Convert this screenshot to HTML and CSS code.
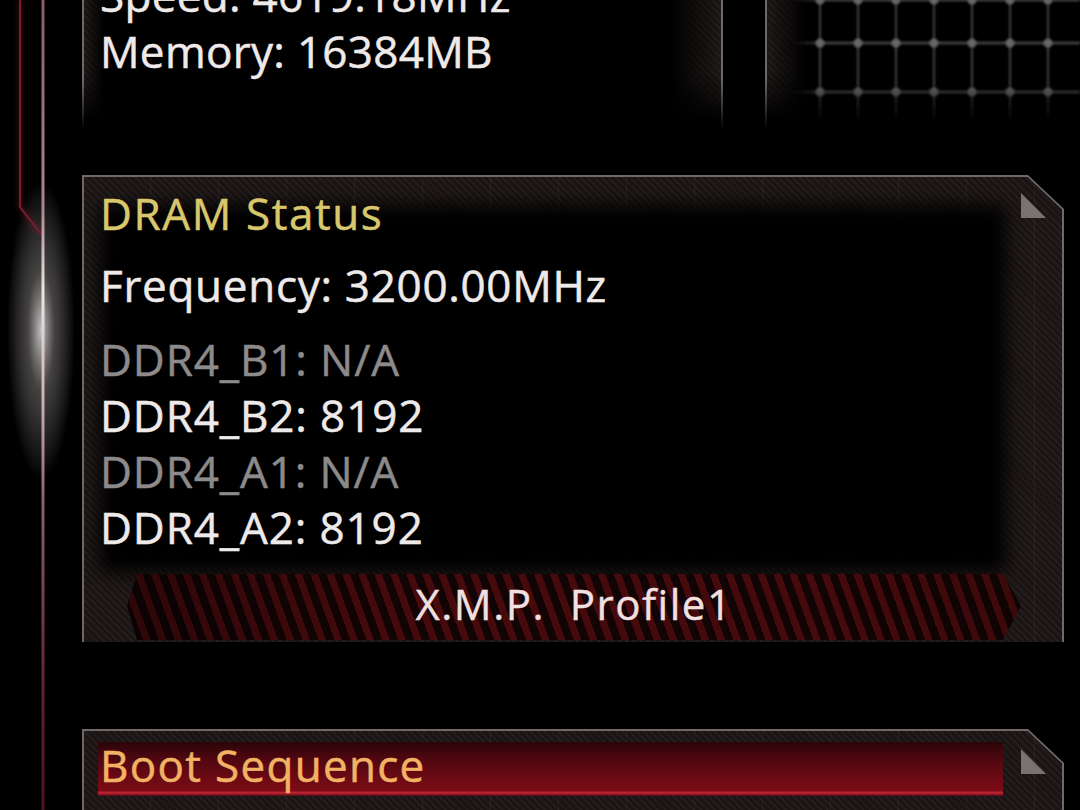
FILE: index.html
```html
<!DOCTYPE html>
<html lang="en">
<head>
<meta charset="utf-8">
<title>DRAM Status</title>
<link rel="stylesheet" href="styles.css">
</head>
<body>
<div class="screen">
  <aside class="rail">
    <svg width="82" height="810" viewBox="0 0 82 810" aria-hidden="true">
      <defs>
        <linearGradient id="railLine" x1="0" y1="0" x2="0" y2="810" gradientUnits="userSpaceOnUse">
          <stop offset="0" stop-color="#8a5a64"/>
          <stop offset="0.26" stop-color="#a98890"/>
          <stop offset="0.36" stop-color="#eee6e6"/>
          <stop offset="0.5" stop-color="#c6aeb2"/>
          <stop offset="0.62" stop-color="#8a6068"/>
          <stop offset="0.85" stop-color="#5e2430"/>
          <stop offset="1" stop-color="#4a1420"/>
        </linearGradient>
        <radialGradient id="railGlow" cx="0.5" cy="0.5" r="0.5">
          <stop offset="0" stop-color="#ffffff" stop-opacity="0.75"/>
          <stop offset="0.4" stop-color="#d8cccc" stop-opacity="0.32"/>
          <stop offset="1" stop-color="#ffffff" stop-opacity="0"/>
        </radialGradient>
        <filter id="soft" x="-50%" y="-5%" width="200%" height="110%">
          <feGaussianBlur stdDeviation="2.5"/>
        </filter>
      </defs>
      <ellipse cx="41" cy="330" rx="34" ry="150" fill="url(#railGlow)"/>
      <path d="M20 0 V207 L41 234" stroke="#9a2038" stroke-width="6" fill="none" opacity="0.25" filter="url(#soft)"/>
      <path d="M20 0 V207 L41 234" stroke="#7a1c30" stroke-width="2" fill="none"/>
      <line x1="43" y1="0" x2="43" y2="810" stroke="url(#railLine)" stroke-width="7" opacity="0.3" filter="url(#soft)"/>
      <line x1="43" y1="0" x2="43" y2="810" stroke="url(#railLine)" stroke-width="3"/>
    </svg>
  </aside>

  <main class="content">
    <section class="top-row">
      <div class="sys-panel">
        <p class="line">Speed: 4619.18MHz</p>
        <p class="line">Memory: 16384MB</p>
      </div>
      <div class="grid-panel">
        <svg class="grid" width="315" height="175" viewBox="0 0 315 175" aria-hidden="true">
          <defs>
            <filter id="haze" x="-10%" y="-10%" width="120%" height="120%">
              <feGaussianBlur stdDeviation="1"/>
            </filter>
            <linearGradient id="rowFade" x1="0" y1="0" x2="315" y2="0" gradientUnits="userSpaceOnUse">
              <stop offset="0.08" stop-color="#3e3e3e" stop-opacity="0"/>
              <stop offset="0.2" stop-color="#3e3e3e"/>
              <stop offset="1" stop-color="#3e3e3e"/>
            </linearGradient>
          </defs>
          <g filter="url(#haze)">
            <g stroke="url(#rowFade)" stroke-width="3">
              <line x1="20" y1="40" x2="315" y2="40"/>
              <line x1="20" y1="83" x2="315" y2="83"/>
              <line x1="20" y1="132" x2="315" y2="132"/>
            </g>
            <g stroke="#424242" stroke-width="2">
              <line x1="55" y1="0" x2="55" y2="175"/>
              <line x1="93" y1="0" x2="93" y2="175"/>
              <line x1="131" y1="0" x2="131" y2="175"/>
              <line x1="169" y1="0" x2="169" y2="175"/>
              <line x1="207" y1="0" x2="207" y2="175"/>
              <line x1="245" y1="0" x2="245" y2="175"/>
              <line x1="283" y1="0" x2="283" y2="175"/>
            </g>
            <g fill="#666">
              <circle cx="55" cy="40" r="4.5"/><circle cx="93" cy="40" r="4.5"/><circle cx="131" cy="40" r="4.5"/><circle cx="169" cy="40" r="4.5"/><circle cx="207" cy="40" r="4.5"/><circle cx="245" cy="40" r="4.5"/><circle cx="283" cy="40" r="4.5"/>
              <circle cx="55" cy="83" r="4.5"/><circle cx="93" cy="83" r="4.5"/><circle cx="131" cy="83" r="4.5"/><circle cx="169" cy="83" r="4.5"/><circle cx="207" cy="83" r="4.5"/><circle cx="245" cy="83" r="4.5"/><circle cx="283" cy="83" r="4.5"/>
              <circle cx="55" cy="132" r="4.5"/><circle cx="93" cy="132" r="4.5"/><circle cx="131" cy="132" r="4.5"/><circle cx="169" cy="132" r="4.5"/><circle cx="207" cy="132" r="4.5"/><circle cx="245" cy="132" r="4.5"/><circle cx="283" cy="132" r="4.5"/>
            </g>
          </g>
        </svg>
      </div>
    </section>

    <section class="panel dram">
      <svg class="frame" width="982" height="467" viewBox="0 0 982 467" aria-hidden="true">
        <polyline points="1,467 1,1 946,1 981,34 981,467" fill="none" stroke="#6e6868" stroke-width="2"/>
        <polygon points="939,18 939,43 964,43" fill="#7a7272"/>
      </svg>
      <h2 class="panel-title">DRAM Status</h2>
      <p class="line freq">Frequency: 3200.00MHz</p>
      <ul class="slots">
        <li class="line slot empty">DDR4_B1: N/A</li>
        <li class="line slot">DDR4_B2: 8192</li>
        <li class="line slot empty">DDR4_A1: N/A</li>
        <li class="line slot">DDR4_A2: 8192</li>
      </ul>
      <div class="xmp">X.M.P.  Profile1</div>
    </section>

    <section class="panel boot">
      <svg class="frame" width="982" height="100" viewBox="0 0 982 100" aria-hidden="true">
        <polyline points="1,100 1,1 946,1 981,34 981,100" fill="none" stroke="#6e6868" stroke-width="2"/>
        <polygon points="939,20 939,45 964,45" fill="#7a7272"/>
      </svg>
      <div class="boot-head">
        <h2 class="boot-title">Boot Sequence</h2>
      </div>
    </section>
  </main>
</div>
</body>
</html>
```

FILE: styles.css
```css
* {
  box-sizing: border-box;
  margin: 0;
  padding: 0;
}

html,
body {
  background: #000;
}

body {
  width: 1080px;
  height: 810px;
  overflow: hidden;
  font-family: "Open Sans", "Noto Sans", sans-serif;
  color: #efeaea;
}

.screen {
  display: flex;
  height: 810px;
}

/* left decorative rail with the glowing light pipe */
.rail {
  flex: 0 0 82px;
}

.rail svg {
  display: block;
}

.content {
  flex: 1;
  min-width: 0;
  display: flex;
  flex-direction: column;
}

.line {
  font-size: 44px;
  line-height: 56px;
  white-space: nowrap;
  letter-spacing: 0.3px;
  -webkit-text-stroke: 0.5px currentColor;
}

/* top row: system info box and the dotted grid box */
.top-row {
  display: flex;
  gap: 42px;
  height: 175px;
  margin-top: -40px;
  flex: none;
}

.sys-panel {
  width: 641px;
  flex: none;
  padding: 7px 0 0 18px;
  background:
    linear-gradient(to bottom, #6d6767 0, #6d6767 118px, rgba(109, 103, 103, 0) 170px) left top / 2px 100% no-repeat,
    linear-gradient(to bottom, #6d6767 0, #6d6767 118px, rgba(109, 103, 103, 0) 170px) right top / 2px 100% no-repeat,
    linear-gradient(to right, rgba(0, 0, 0, 0) 2px, #000 22px, #000 calc(100% - 52px), rgba(0, 0, 0, 0) calc(100% - 2px)),
    linear-gradient(to bottom, rgba(0, 0, 0, 0) 0, rgba(0, 0, 0, 0) 112px, #000 160px),
    repeating-linear-gradient(45deg, rgba(255, 255, 255, 0.04) 0 2px, rgba(255, 255, 255, 0) 2px 5px),
    #1c1515;
}

.grid-panel {
  flex: 1;
  min-width: 0;
  overflow: hidden;
  background:
    linear-gradient(to bottom, #6d6767 0, #6d6767 118px, rgba(109, 103, 103, 0) 170px) left top / 2px 100% no-repeat,
    linear-gradient(to right, rgba(0, 0, 0, 0) 2px, #000 40px),
    linear-gradient(to bottom, rgba(0, 0, 0, 0) 0, rgba(0, 0, 0, 0) 112px, #000 160px),
    repeating-linear-gradient(45deg, rgba(255, 255, 255, 0.04) 0 2px, rgba(255, 255, 255, 0) 2px 5px),
    #1c1515;
}

.grid {
  display: block;
  -webkit-mask-image: linear-gradient(to bottom, #000 0, #000 122px, rgba(0, 0, 0, 0) 162px);
  mask-image: linear-gradient(to bottom, #000 0, #000 122px, rgba(0, 0, 0, 0) 162px);
}

/* framed panels with a cut top-right corner */
.panel {
  position: relative;
  isolation: isolate;
  flex: none;
  width: 982px;
  clip-path: polygon(0 0, calc(100% - 36px) 0, 100% 34px, 100% 100%, 0 100%);
  background:
    repeating-linear-gradient(90deg, rgba(255, 255, 255, 0.045) 0 1px, rgba(255, 255, 255, 0) 1px 68px),
    repeating-linear-gradient(45deg, rgba(255, 255, 255, 0.04) 0 2px, rgba(255, 255, 255, 0) 2px 5px),
    #1b1414;
}

.panel::before {
  content: "";
  position: absolute;
  top: 30px;
  left: 18px;
  right: 58px;
  bottom: 70px;
  background: #000;
  filter: blur(9px);
  z-index: -1;
}

.frame {
  position: absolute;
  inset: 0;
  pointer-events: none;
}

.dram {
  margin-top: 40px;
  height: 467px;
  padding: 10px 0 0 18px;
}

.panel-title {
  font-size: 44px;
  line-height: 56px;
  font-weight: 400;
  color: #d9c76b;
  letter-spacing: 1.6px;
  -webkit-text-stroke: 0.5px currentColor;
}

.freq {
  margin-top: 16px;
  letter-spacing: 0.7px;
}

.slots {
  list-style: none;
  margin-top: 18px;
}

.slot {
  letter-spacing: 0.9px;
}

.slot.empty {
  color: #8c8a8a;
}

.xmp {
  margin: 19px 0 0 27px;
  width: 894px;
  height: 66px;
  padding-bottom: 6px;
  font-size: 42px;
  line-height: 60px;
  text-align: center;
  white-space: pre;
  letter-spacing: 1.5px;
  color: #f2e0e0;
  -webkit-text-stroke: 0.4px currentColor;
  clip-path: polygon(10px 0, calc(100% - 18px) 0, 100% 48%, calc(100% - 18px) 100%, 10px 100%, 0 48%);
  background:
    linear-gradient(to right, rgba(0, 0, 0, 0.35), rgba(0, 0, 0, 0) 30%, rgba(0, 0, 0, 0) 75%, rgba(0, 0, 0, 0.15)),
    repeating-linear-gradient(70deg, #460a0d 0 7px, #120304 7px 15px);
}

.boot {
  margin-top: 87px;
  height: 100px;
  padding: 13px 0 0 16px;
}

.boot-head {
  width: 905px;
  height: 54px;
  padding-left: 2px;
  background: linear-gradient(to bottom, #2a0508 0, #4e0710 30%, #6e0a14 70%, #7c0c16 90%, #c52636 94%, #4a0a10 100%);
}

.boot-title {
  font-size: 44px;
  line-height: 46px;
  font-weight: 400;
  color: #f1b363;
  letter-spacing: 1.3px;
  white-space: nowrap;
  -webkit-text-stroke: 0.5px currentColor;
}
```
